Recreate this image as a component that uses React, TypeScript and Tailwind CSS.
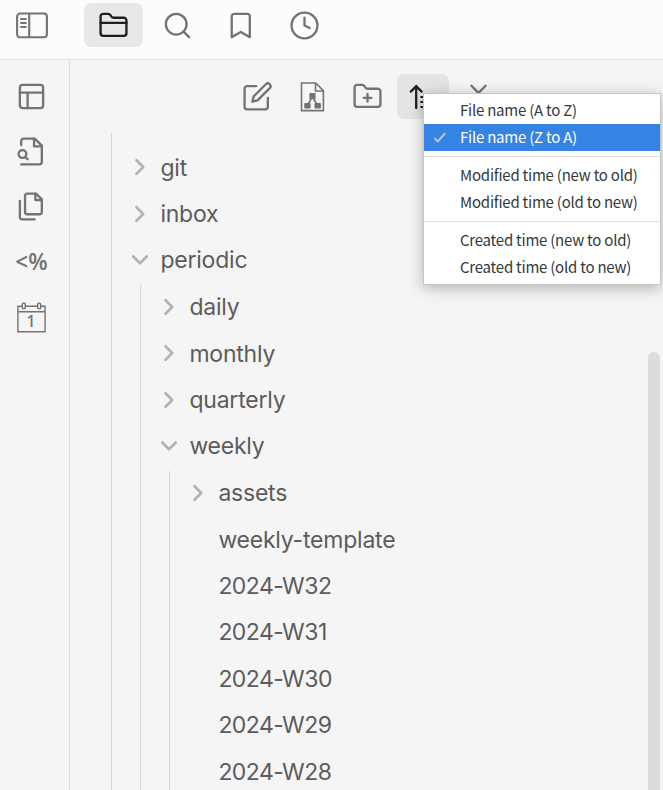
import type { ReactNode } from "react";

const ink = "text-[#737373]";

function Icon({ children, className = "" }: { children: ReactNode; className?: string }) {
  return (
    <svg
      viewBox="0 0 24 24"
      className={`size-[31px] shrink-0 ${className}`}
      fill="none"
      stroke="currentColor"
      strokeWidth="1.8"
      strokeLinecap="round"
      strokeLinejoin="round"
    >
      {children}
    </svg>
  );
}

function Tab({ active = false, children }: { active?: boolean; children: ReactNode }) {
  return (
    <button
      className={`flex h-[44px] w-[59px] items-center justify-center rounded-[7px] pt-px ${
        active ? "bg-[#e8e8e8] text-[#1f1f1f]" : ink
      }`}
    >
      {children}
    </button>
  );
}

function TopBar() {
  return (
    <header className="flex h-[60px] items-start border-b border-[#e0e0e0] bg-[#fcfcfc] pt-[3px]">
      <div className={`flex h-[44px] w-[84px] items-center pl-[15px] ${ink}`}>
        <svg viewBox="0 0 34 28" className="h-7 w-[34px]" fill="none" stroke="currentColor">
          <rect x="2.1" y="2.5" width="29.8" height="23.8" rx="3" strokeWidth="2.1" />
          <path d="M14.2 2.5v24" strokeWidth="2.1" />
          <path d="M5.2 8h6.4M5.2 12h6.4M5.2 16h6.4" strokeWidth="2" />
        </svg>
      </div>
      <nav className="flex gap-[4.6px]">
        <Tab active>
          <Icon>
            <path d="M20 20a2 2 0 0 0 2-2V8a2 2 0 0 0-2-2h-7.9a2 2 0 0 1-1.69-.9L9.6 3.9A2 2 0 0 0 7.93 3H4a2 2 0 0 0-2 2v13a2 2 0 0 0 2 2Z" />
            <path d="M2 10h20" />
          </Icon>
        </Tab>
        <Tab>
          <Icon>
            <circle cx="11" cy="11" r="8" />
            <path d="m21 21-4.3-4.3" />
          </Icon>
        </Tab>
        <Tab>
          <Icon>
            <path d="m19.2 21-7-4-7 4V5a2 2 0 0 1 2-2h10a2 2 0 0 1 2 2v16z" />
          </Icon>
        </Tab>
        <Tab>
          <Icon>
            <circle cx="12" cy="12" r="10" />
            <path d="M12 6v6l4 2" />
          </Icon>
        </Tab>
      </nav>
    </header>
  );
}

function Ribbon() {
  return (
    <aside
      className={`flex w-[70px] shrink-0 flex-col items-center gap-[24.1px] border-r border-[#e0e0e0] pt-[21px] pr-[6px] ${ink}`}
    >
      <Icon>
        <rect x="3" y="3" width="18" height="18" rx="2" />
        <path d="M3 9h18M9 21V9" />
      </Icon>
      <Icon>
        <path d="M4 22h14a2 2 0 0 0 2-2V7.5L14.5 2H6a2 2 0 0 0-2 2v3" />
        <path d="M14 2v6h6" />
        <circle cx="5" cy="14" r="3" />
        <path d="m9 18-1.5-1.5" />
      </Icon>
      <Icon>
        <path d="M15.5 2H8.6c-.4 0-.8.2-1.1.5-.3.3-.5.7-.5 1.1v12.8c0 .4.2.8.5 1.1.3.3.7.5 1.1.5h9.8c.4 0 .8-.2 1.1-.5.3-.3.5-.7.5-1.1V6.5L15.5 2z" />
        <path d="M3 7.6v12.8c0 .4.2.8.5 1.1.3.3.7.5 1.1.5h9.8" />
        <path d="M15 2v5h5" />
      </Icon>
      <div className="flex h-[31px] items-center pt-px font-['Open_Sans',sans-serif] text-[22.5px] leading-none font-semibold">
        &lt;%
      </div>
      <svg viewBox="0 0 32 32" className="size-8" fill="none" stroke="currentColor" strokeWidth="1.4">
        <path d="M6.3 5.2H1.9v25.6h27.2V5.2h-4.4M9.3 5.2h12.4M1.9 10.8h27.2" />
        <rect x="6.3" y="2.3" width="3" height="5.6" rx="1.3" />
        <rect x="21.7" y="2.3" width="3" height="5.6" rx="1.3" />
        <text
          x="15.1"
          y="25.9"
          textAnchor="middle"
          fill="currentColor"
          stroke="none"
          className="font-['Noto_Sans',sans-serif] text-[16.5px] font-medium"
        >
          1
        </text>
      </svg>
    </aside>
  );
}

function Action({ active = false, children }: { active?: boolean; children: ReactNode }) {
  return (
    <button
      className={`flex h-[45px] w-[52px] items-center justify-center rounded-[7px] ${
        active ? "bg-[#e4e4e4] text-[#1f1f1f]" : ink
      }`}
    >
      {children}
    </button>
  );
}

function Toolbar() {
  return (
    <div className="flex h-[73px] items-start gap-[3.3px] pt-[14px] pl-[161.1px]">
      <Action>
        <Icon>
          <path d="M11 4H4a2 2 0 0 0-2 2v14a2 2 0 0 0 2 2h14a2 2 0 0 0 2-2v-7" />
          <path d="M18.5 2.5a2.121 2.121 0 0 1 3 3L12 15l-4 1 1-4 9.5-9.5z" />
        </Icon>
      </Action>
      <Action>
        <svg viewBox="0 0 26 32" className="h-8 w-[26px]" fill="none" stroke="currentColor" strokeWidth="1.6">
          <path d="M2.5 2h14.2l7.7 7.7v19.9H2.5zM16.5 2v8h8" />
          <path d="m13.2 16-4.6 8M13.6 16l4.6 8" />
          <g fill="currentColor" stroke="none">
            <rect x="10.4" y="12" width="6.2" height="6" rx="1" />
            <rect x="5.2" y="22" width="6.4" height="5.6" rx="1" />
            <rect x="15.5" y="22" width="6.4" height="5.6" rx="1" />
          </g>
        </svg>
      </Action>
      <Action>
        <Icon>
          <path d="M4 20h16a2 2 0 0 0 2-2V8a2 2 0 0 0-2-2h-7.93a2 2 0 0 1-1.66-.9l-.82-1.2A2 2 0 0 0 7.93 3H4a2 2 0 0 0-2 2v13a2 2 0 0 0 2 2Z" />
          <path d="M12 10v6M9 13h6" />
        </Icon>
      </Action>
      <Action active>
        <svg viewBox="0 0 32 32" className="size-8" fill="none" stroke="currentColor" strokeWidth="2.3">
          <path d="M9.2 27V5.2M3.8 10.6l5.4-5.4 5.4 5.4" strokeLinecap="round" />
          <path d="M13.4 16h6M13.4 21h9M13.4 26h12" strokeWidth="2" />
        </svg>
      </Action>
      <Action>
        <Icon>
          <path d="m6.5 3.7 5.5 5.5 5.5-5.5" />
        </Icon>
      </Action>
    </div>
  );
}

type Node = { name: string; folder?: boolean; children?: Node[] };

const tree: Node[] = [
  { name: "git", folder: true },
  { name: "inbox", folder: true },
  {
    name: "periodic",
    folder: true,
    children: [
      { name: "daily", folder: true },
      { name: "monthly", folder: true },
      { name: "quarterly", folder: true },
      {
        name: "weekly",
        folder: true,
        children: [
          { name: "assets", folder: true },
          { name: "weekly-template" },
          { name: "2024-W32" },
          { name: "2024-W31" },
          { name: "2024-W30" },
          { name: "2024-W29" },
          { name: "2024-W28" },
        ],
      },
    ],
  },
];

function TreeItem({ node, depth = 0 }: { node: Node; depth?: number }) {
  const isDate = /^\d/.test(node.name);
  return (
    <li>
      <div className="mb-[3px] flex h-[43.4px] items-center pl-[18px]">
        <span className="flex w-[30.4px] text-[#b3b3b3]">
          {node.folder && (
            <svg
              viewBox="0 0 20 20"
              className={`size-5 ${node.children ? "rotate-90" : ""}`}
              fill="none"
              stroke="currentColor"
              strokeWidth="2.7"
              strokeLinecap="round"
              strokeLinejoin="round"
            >
              <path d="m6.5 3.3 6.7 6.7-6.7 6.7" />
            </svg>
          )}
        </span>
        <span
          className={`pt-[0.6px] text-[23px] leading-7 whitespace-nowrap text-[#5c5c5c] ${
            isDate ? "tracking-[-0.55px]" : "tracking-[-0.22px]"
          }`}
        >
          {node.name}
        </span>
      </div>
      {node.children && (
        <ul className={`ml-[28px] border-l border-[#d6d6d6] ${depth === 0 ? "pt-[0.35px]" : "pt-[0.6px]"}`}>
          {node.children.map((c) => (
            <TreeItem key={c.name} node={c} depth={depth + 1} />
          ))}
        </ul>
      )}
    </li>
  );
}

const groups = [
  ["File name (A to Z)", "File name (Z to A)"],
  ["Modified time (new to old)", "Modified time (old to new)"],
  ["Created time (new to old)", "Created time (old to new)"],
];

function SortMenu() {
  return (
    <div className="absolute top-[93px] left-[423px] w-[238px] border border-[#c9c5bf] bg-white py-[3px] font-['Noto_Sans_CJK_SC',sans-serif] text-[15px] tracking-[-0.23px] text-[#33393b] shadow-[0_3px_14px_rgba(0,0,0,0.28)]">
      {groups.map((items, i) => (
        <div key={items[0]} className={i > 0 ? "mt-[5px] border-t border-[#e1e1e1] pt-[5px]" : ""}>
          {items.map((label) => {
            const checked = label === "File name (Z to A)";
            return (
              <div
                key={label}
                className={`flex h-[27px] items-center pl-[9px] ${checked ? "bg-[#3584e4] text-white" : ""}`}
              >
                <span className="w-[27px]">
                  {checked && (
                    <svg viewBox="0 0 14 14" className="size-3.5" fill="none" stroke="#c0c6cf" strokeWidth="2">
                      <path d="m1.5 7.2 3.4 3.2 7.3-8.3" />
                    </svg>
                  )}
                </span>
                <span className="whitespace-nowrap">{label}</span>
              </div>
            );
          })}
        </div>
      ))}
    </div>
  );
}

export default function App() {
  return (
    <div className="relative flex h-[790px] w-[663px] flex-col overflow-hidden bg-[#f5f5f5] font-['Inter',sans-serif]">
      <TopBar />
      <div className="flex min-h-0 flex-1">
        <Ribbon />
        <main className="flex min-w-0 flex-1 flex-col">
          <Toolbar />
          <div className="flex min-h-0 flex-1 overflow-hidden">
            <ul className="ml-[41px] flex-1 self-start border-l border-[#d6d6d6] pt-[12.62px]">
              {tree.map((n) => (
                <TreeItem key={n.name} node={n} />
              ))}
            </ul>
            <div className="mt-[219px] mr-[3px] h-[600px] w-3 shrink-0 rounded-full bg-[#dcdcdc]" />
          </div>
        </main>
      </div>
      <SortMenu />
    </div>
  );
}
